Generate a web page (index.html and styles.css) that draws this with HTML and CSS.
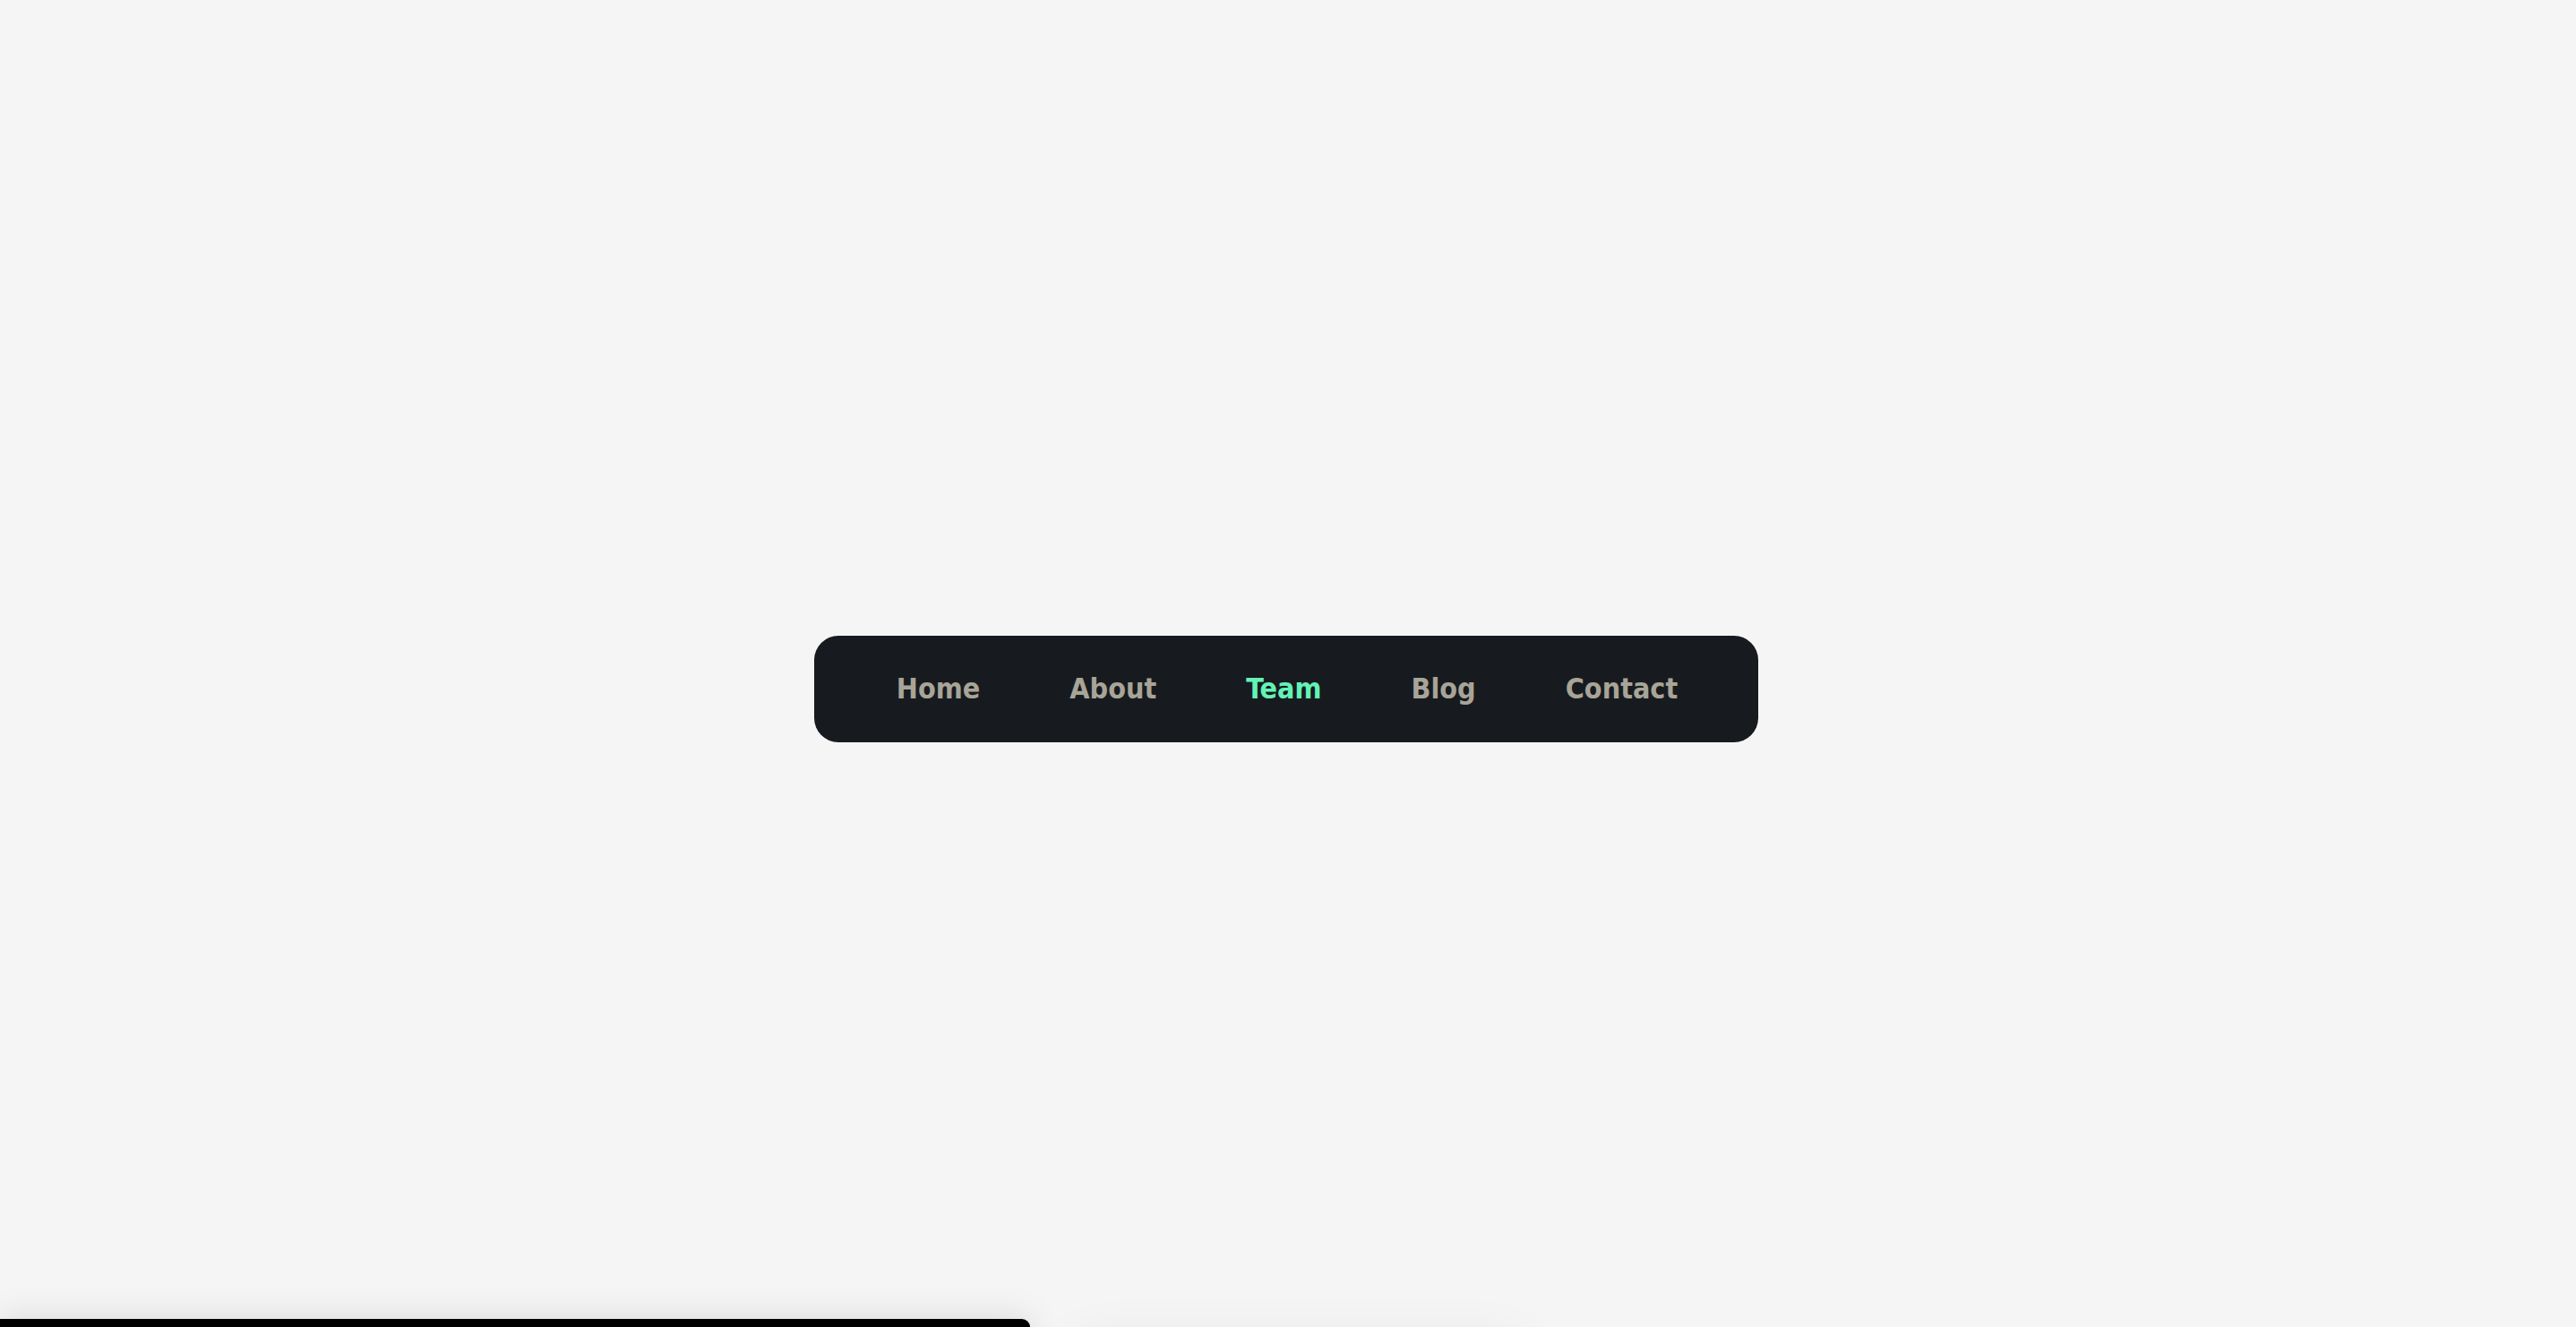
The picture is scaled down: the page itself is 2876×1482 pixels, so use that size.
FILE: index.html
```html
<!DOCTYPE html>
<html lang="en">
<head>
<meta charset="utf-8">
<title>Nav</title>
<link rel="stylesheet" href="styles.css">
</head>
<body>
<main class="stage">
  <nav class="nav">
    <a class="nav-link" href="#">Home</a>
    <a class="nav-link" href="#">About</a>
    <a class="nav-link active" href="#">Team</a>
    <a class="nav-link" href="#">Blog</a>
    <a class="nav-link" href="#">Contact</a>
  </nav>
</main>
<div class="dock"></div>
<div class="toast-shadow"></div>
</body>
</html>
```
FILE: styles.css
```css
html, body {
  margin: 0;
  padding: 0;
  height: 100%;
  overflow: hidden;
  background: #f5f5f5;
}
.stage {
  height: 100%;
  display: flex;
  align-items: center;
  justify-content: center;
  padding-top: 56px;
  box-sizing: border-box;
}
.nav {
  display: flex;
  align-items: center;
  gap: 100px;
  padding: 41px 90px 41px 92px;
  background: #171b1f;
  border-radius: 27px;
  margin-right: 4px;
}
.nav-link {
  font-family: "DejaVu Sans", Verdana, sans-serif;
  font-stretch: condensed;
  font-weight: bold;
  font-size: 32px;
  line-height: 37px;
  color: #a8a498;
  text-decoration: none;
}
.nav-link.active {
  color: #64f2b7;
}
.dock {
  position: fixed;
  left: 0;
  top: 1473px;
  width: 1150px;
  height: 60px;
  background: #000;
  border-radius: 0 9px 0 0;
  box-shadow: 0 0 40px rgba(0, 0, 0, 0.12);
}
.toast-shadow {
  position: fixed;
  left: 1200px;
  top: 1500px;
  width: 500px;
  height: 60px;
  background: #f5f5f5;
  border-radius: 12px;
  box-shadow: 0 0 60px rgba(0, 0, 0, 0.08);
}
```
